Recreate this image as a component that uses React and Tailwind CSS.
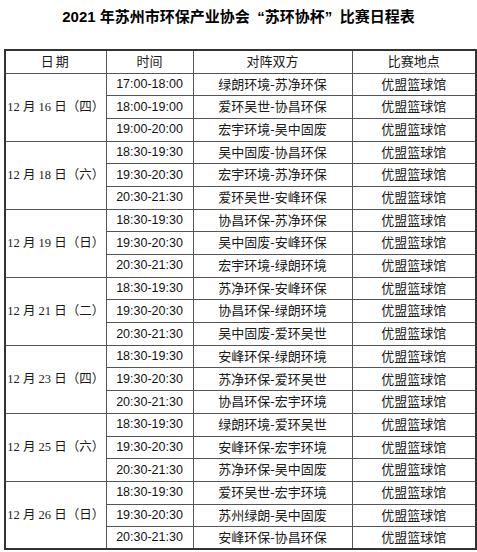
import React from "react";

const schedule = [
  { date: "12", day: "16", week: "四", games: [
    ["17:00-18:00", "绿朗环境-苏净环保"],
    ["18:00-19:00", "爱环吴世-协昌环保"],
    ["19:00-20:00", "宏宇环境-吴中固废"],
  ]},
  { date: "12", day: "18", week: "六", games: [
    ["18:30-19:30", "吴中固废-协昌环保"],
    ["19:30-20:30", "宏宇环境-苏净环保"],
    ["20:30-21:30", "爱环吴世-安峰环保"],
  ]},
  { date: "12", day: "19", week: "日", games: [
    ["18:30-19:30", "协昌环保-苏净环保"],
    ["19:30-20:30", "吴中固废-安峰环保"],
    ["20:30-21:30", "宏宇环境-绿朗环境"],
  ]},
  { date: "12", day: "21", week: "二", games: [
    ["18:30-19:30", "苏净环保-安峰环保"],
    ["19:30-20:30", "协昌环保-绿朗环境"],
    ["20:30-21:30", "吴中固废-爱环吴世"],
  ]},
  { date: "12", day: "23", week: "四", games: [
    ["18:30-19:30", "安峰环保-绿朗环境"],
    ["19:30-20:30", "苏净环保-爱环吴世"],
    ["20:30-21:30", "协昌环保-宏宇环境"],
  ]},
  { date: "12", day: "25", week: "六", games: [
    ["18:30-19:30", "绿朗环境-爱环吴世"],
    ["19:30-20:30", "安峰环保-宏宇环境"],
    ["20:30-21:30", "苏净环保-吴中固废"],
  ]},
  { date: "12", day: "26", week: "日", games: [
    ["18:30-19:30", "爱环吴世-宏宇环境"],
    ["19:30-20:30", "苏州绿朗-吴中固废"],
    ["20:30-21:30", "安峰环保-协昌环保"],
  ]},
];

const cell = "border border-[#555] p-0 text-center align-middle";
const serif = "font-['Liberation_Serif','Noto_Sans_CJK_SC',serif]";

function App() {
  return (
    <div className="w-[477px] h-[552px] bg-white text-[#1a1a1a] pt-[6px]">
      <h1 className="h-[22px] leading-[22px] text-center text-[15px] font-bold text-black font-['Liberation_Sans','Noto_Sans_CJK_SC',sans-serif]">
        2021 年苏州市环保产业协会<span className="inline-block w-[15px] text-right">“</span>苏环协杯<span className="inline-block w-[15px] text-left">”</span>比赛日程表
      </h1>

      <table className="ml-[4px] mt-[21px] w-[471px] table-fixed border-collapse border-2 border-[#333] text-[13px]">
        <colgroup>
          <col className="w-[101px]" />
          <col className="w-[87px]" />
          <col className="w-[159px]" />
          <col className="w-[124px]" />
        </colgroup>
        <thead>
          <tr className={"h-[23px] " + serif}>
            <th className={cell + " font-normal tracking-[2px]"}>日期</th>
            <th className={cell + " font-normal"}>时间</th>
            <th className={cell + " font-normal"}>对阵双方</th>
            <th className={cell + " font-normal"}>比赛地点</th>
          </tr>
        </thead>
        <tbody>
          {schedule.map((d) =>
            d.games.map((g, i) => (
              <tr key={d.day + g[0]} className="h-[22.7px]">
                {i === 0 ? (
                  <td rowSpan={3} className={cell + " " + serif + " text-[12.5px] whitespace-nowrap"}>
                    {d.date} 月 {d.day} 日（{d.week}）
                  </td>
                ) : null}
                <td className={cell + " text-[12.5px] text-[#111] font-['Liberation_Sans',sans-serif]"}>{g[0]}</td>
                <td className={cell + " " + serif}>{g[1]}</td>
                <td className={cell + " " + serif}>优盟篮球馆</td>
              </tr>
            ))
          )}
        </tbody>
      </table>
    </div>
  );
}

export default App;
